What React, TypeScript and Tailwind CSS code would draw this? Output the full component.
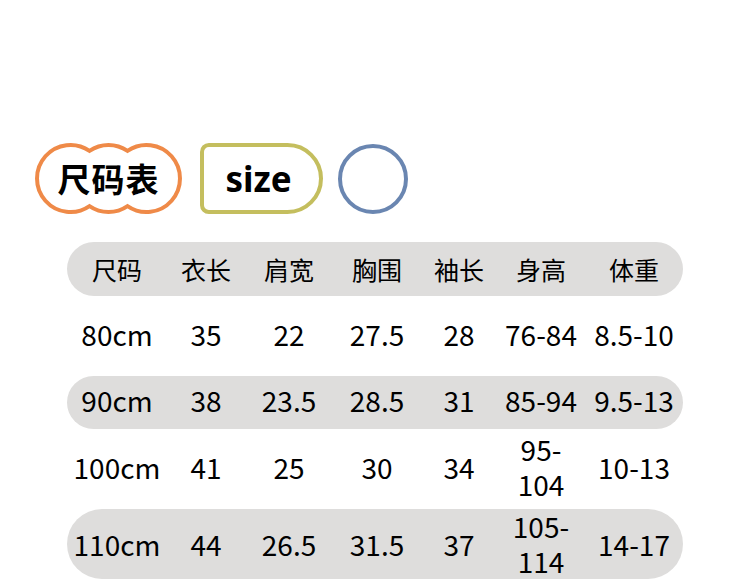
import React from "react";

const cols = "grid grid-cols-[100px_78px_88px_88px_76px_88px_98px] items-center text-center";
const font = { fontFamily: '"Noto Sans CJK SC", "Noto Sans", sans-serif' };

type Cell = string | [string, string];

const rows: { cells: Cell[]; h: string; bg: boolean }[] = [
  { cells: ["80cm", "35", "22", "27.5", "28", "76-84", "8.5-10"], h: "h-[80px]", bg: false },
  { cells: ["90cm", "38", "23.5", "28.5", "31", "85-94", "9.5-13"], h: "h-[53px]", bg: true },
  { cells: ["100cm", "41", "25", "30", "34", ["95-", "104"], "10-13"], h: "h-[80px]", bg: false },
  { cells: ["110cm", "44", "26.5", "31.5", "37", ["105-", "114"], "14-17"], h: "h-[70px]", bg: true },
];

export default function App() {
  return (
    <div className="w-[750px] h-[580px] bg-white overflow-hidden text-black" style={font}>
      <div className="pt-[141px] pl-[33px] flex items-center">
        <div className="relative w-[151px] h-[75px] flex items-center justify-center">
          <svg className="absolute inset-0" width="151" height="75" viewBox="0 0 151 75">
            <path
              d="M 56.5 9.9 A 33.5 33.5 0 0 1 94.5 9.9 A 33.5 33.5 0 1 1 94.5 65.1 A 33.5 33.5 0 0 1 56.5 65.1 A 33.5 33.5 0 1 1 56.5 9.9 Z"
              fill="white"
              stroke="#ef8a48"
              strokeWidth="4"
            />
          </svg>
          <span className="relative text-[33px] font-bold leading-none tracking-[1px]">尺码表</span>
        </div>
        <div className="ml-[16px] w-[123px] h-[71px] border-[4px] border-[#c4be5e] rounded-l-[9px] rounded-r-[36px] flex items-center justify-center pr-[6px]">
          <span className="text-[35px] font-bold leading-none" style={{ fontFamily: '"Noto Sans", sans-serif' }}>size</span>
        </div>
        <div className="ml-[15px] w-[70px] h-[70px] rounded-full border-[4px] border-[#6a86b1]" />
      </div>

      <div className="mt-[26px] ml-[67px] w-[616px]">
        <div className={`${cols} h-[54px] rounded-full bg-[#dedddc] text-[25px] leading-none`}>
          {["尺码", "衣长", "肩宽", "胸围", "袖长", "身高", "体重"].map((t) => (
            <div key={t}>{t}</div>
          ))}
        </div>
        {rows.map((r, i) => (
          <div
            key={i}
            className={`${cols} ${r.h} ${r.bg ? "rounded-full bg-[#dedddc]" : ""} pb-[4px] text-[28px] leading-[35px]`}
          >
            {r.cells.map((c, j) => (
              <div key={j} className="flex flex-col items-center whitespace-nowrap">
                {Array.isArray(c) ? (
                  <>
                    <span>{c[0]}</span>
                    <span>{c[1]}</span>
                  </>
                ) : (
                  <span>{c}</span>
                )}
              </div>
            ))}
          </div>
        ))}
      </div>
    </div>
  );
}
